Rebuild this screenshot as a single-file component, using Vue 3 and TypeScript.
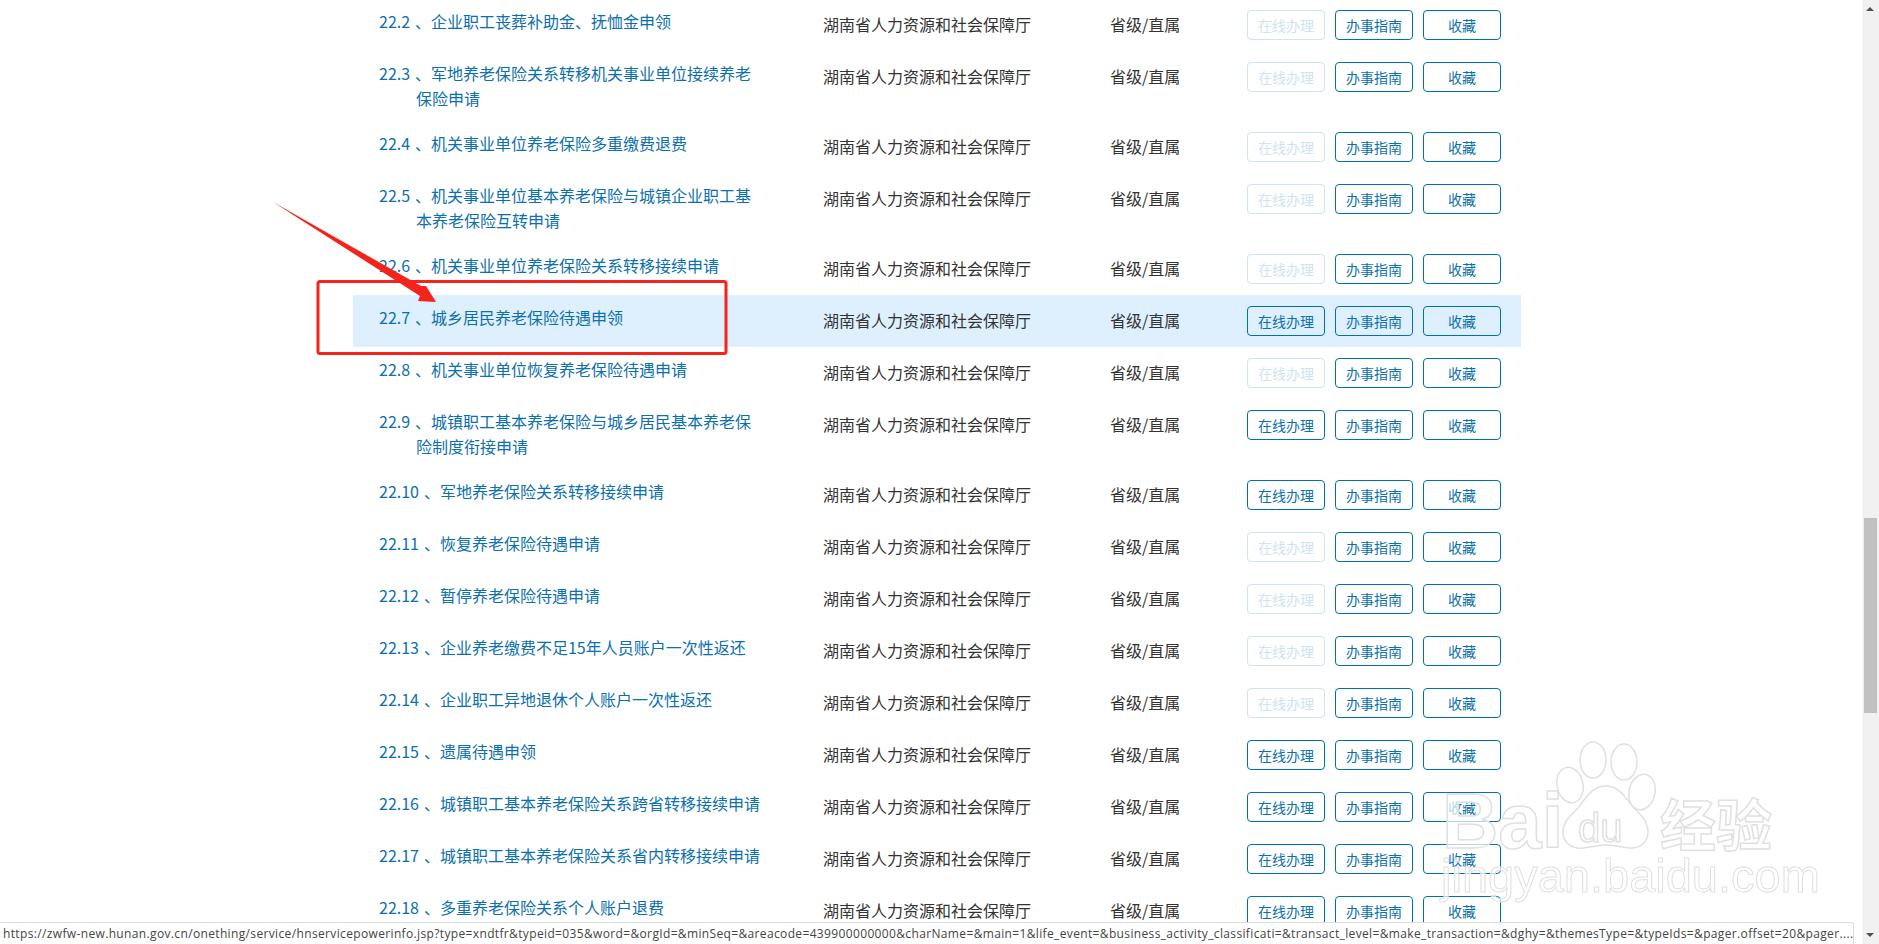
<script setup lang="ts">
interface Row { num: string; title: string; online: boolean; active?: boolean }
const rows: Row[] = [
  { num: '22.2', title: '、企业职工丧葬补助金、抚恤金申领', online: false },
  { num: '22.3', title: '、军地养老保险关系转移机关事业单位接续养老保险申请', online: false },
  { num: '22.4', title: '、机关事业单位养老保险多重缴费退费', online: false },
  { num: '22.5', title: '、机关事业单位基本养老保险与城镇企业职工基本养老保险互转申请', online: false },
  { num: '22.6', title: '、机关事业单位养老保险关系转移接续申请', online: false },
  { num: '22.7', title: '、城乡居民养老保险待遇申领', online: true, active: true },
  { num: '22.8', title: '、机关事业单位恢复养老保险待遇申请', online: false },
  { num: '22.9', title: '、城镇职工基本养老保险与城乡居民基本养老保险制度衔接申请', online: true },
  { num: '22.10', title: '、军地养老保险关系转移接续申请', online: true },
  { num: '22.11', title: '、恢复养老保险待遇申请', online: false },
  { num: '22.12', title: '、暂停养老保险待遇申请', online: false },
  { num: '22.13', title: '、企业养老缴费不足15年人员账户一次性返还', online: false },
  { num: '22.14', title: '、企业职工异地退休个人账户一次性返还', online: false },
  { num: '22.15', title: '、遗属待遇申领', online: true },
  { num: '22.16', title: '、城镇职工基本养老保险关系跨省转移接续申请', online: true },
  { num: '22.17', title: '、城镇职工基本养老保险关系省内转移接续申请', online: true },
  { num: '22.18', title: '、多重养老保险关系个人账户退费', online: true }
]
const url = 'https://zwfw-new.hunan.gov.cn/onething/service/hnservicepowerinfo.jsp?type=xndtfr&typeid=035&word=&orgId=&minSeq=&areacode=439900000000&charName=&main=1&life_event=&business_activity_classificati=&transact_level=&make_transaction=&dghy=&themesType=&typeIds=&pager.offset=20&pager....'
</script>

<template>
  <div class="page">
    <div class="list">
      <div v-for="r in rows" :key="r.num" class="row" :class="{ active: r.active }">
        <div class="title"><span class="num">{{ r.num }}</span>{{ r.title }}</div>
        <div class="agency">湖南省人力资源和社会保障厅</div>
        <div class="level">省级/直属</div>
        <div class="actions">
          <button class="btn" :class="{ off: !r.online }">在线办理</button>
          <button class="btn">办事指南</button>
          <button class="btn">收藏</button>
        </div>
      </div>
    </div>

    <svg class="overlay" width="1879" height="944" viewBox="0 0 1879 944">
      <rect x="318" y="281.5" width="408" height="72" rx="2" fill="none" stroke="#f5231b" stroke-width="3" />
      <polygon points="273,202 421,286 426,286 436,302 418,301 420,296" fill="#f5231b" />
      <g class="wm">
        <ellipse cx="1593" cy="760" rx="13" ry="18" />
        <ellipse cx="1624" cy="762" rx="13" ry="18" />
        <ellipse cx="1570" cy="785" rx="13" ry="18" transform="rotate(-12 1570 785)" />
        <ellipse cx="1642" cy="792" rx="13" ry="18" transform="rotate(12 1642 792)" />
        <path d="M1606 786c-14 0-20 12-28 22-8 8-15 14-15 24 0 12 10 17 20 16 8-1 15-3 23-3 8 0 15 2 23 3 10 1 19-5 19-16 0-10-6-16-13-23-9-9-14-23-29-23z" />
        <text x="1442" y="848" class="wm-bai">Bai</text>
        <text x="1578" y="842" class="wm-du">du</text>
        <text x="1660" y="846" class="wm-cn">经验</text>
        <text x="1441" y="892" class="wm-url">jingyan.baidu.com</text>
      </g>
    </svg>

    <div class="statusbar">{{ url }}</div>

    <div class="scrollbar">
      <span class="arrow up"></span>
      <span class="thumb"></span>
      <span class="arrow down"></span>
    </div>
  </div>
</template>

<style scoped>
.page {
  position: relative;
  width: 1879px;
  height: 944px;
  overflow: hidden;
  background: #fff;
  font-family: "Noto Sans CJK SC", "Noto Sans", sans-serif;
}
.list {
  width: 1168px;
  margin: -1px 0 0 353px;
}
.row {
  display: grid;
  grid-template-columns: 470px 287px 137px 254px;
  align-items: start;
  padding-top: 11px;
  padding-bottom: 11px;
  min-height: 30px;
  box-sizing: content-box;
}
.row.active {
  background: #def0fe;
}
.title {
  box-sizing: border-box;
  padding: 0 58px 0 63px;
  text-indent: -37px;
  font-size: 16px;
  line-height: 25px;
  color: #0c6fae;
  margin: -1px 0 -1px;
}
.num {
  margin-right: 5px;
}
.agency,
.level {
  font-size: 16px;
  line-height: 30px;
  color: #333;
  white-space: nowrap;
  margin-top: -1px;
}
.actions {
  display: flex;
  gap: 10px;
}
.btn {
  box-sizing: border-box;
  width: 78px;
  height: 30px;
  padding: 0;
  border: 1px solid #0070b0;
  border-radius: 4px;
  background: transparent;
  color: #0c6fae;
  font-family: inherit;
  font-size: 14px;
  line-height: 28px;
}
.btn.off {
  border-color: #cfe3f0;
  color: #cfe3f0;
}
.overlay {
  position: absolute;
  left: 0;
  top: 0;
  pointer-events: none;
}
.wm {
  fill: rgba(255, 255, 255, 0.7);
  stroke: #e0e0e0;
  stroke-width: 1.5;
  filter: blur(0.5px);
}
.wm-bai {
  font-family: "Liberation Sans", sans-serif;
  font-weight: 700;
  font-size: 78px;
}
.wm-du {
  font-family: "Liberation Sans", sans-serif;
  font-size: 40px;
  fill: #fff;
}
.wm-cn {
  font-family: "Noto Sans CJK SC", sans-serif;
  font-weight: 700;
  font-size: 56px;
}
.wm-url {
  font-family: "Liberation Sans", sans-serif;
  font-size: 47px;
  stroke-width: 1;
}
.statusbar {
  position: absolute;
  left: 0;
  bottom: 0;
  box-sizing: border-box;
  width: 1854px;
  height: 22px;
  padding: 0 0 0 3px;
  background: #fff;
  border-top: 1px solid #ddd;
  border-right: 1px solid #ddd;
  border-top-right-radius: 3px;
  font-family: "Open Sans", sans-serif;
  font-size: 12px;
  letter-spacing: 0.355px;
  line-height: 22px;
  color: #444;
  white-space: nowrap;
  overflow: hidden;
}
.scrollbar {
  position: absolute;
  right: 0;
  top: 0;
  width: 17px;
  height: 944px;
  background: #f1f1f1;
}
.thumb {
  position: absolute;
  left: 2px;
  top: 518px;
  width: 13px;
  height: 195px;
  background: #c1c1c1;
}
.arrow {
  position: absolute;
  left: 4px;
  width: 0;
  height: 0;
  border-left: 4px solid transparent;
  border-right: 4px solid transparent;
}
.arrow.up {
  top: 7px;
  border-bottom: 4px solid #505050;
}
.arrow.down {
  bottom: 7px;
  border-top: 4px solid #505050;
}
</style>

<style>
html, body {
  margin: 0;
  overflow: hidden;
}
</style>
